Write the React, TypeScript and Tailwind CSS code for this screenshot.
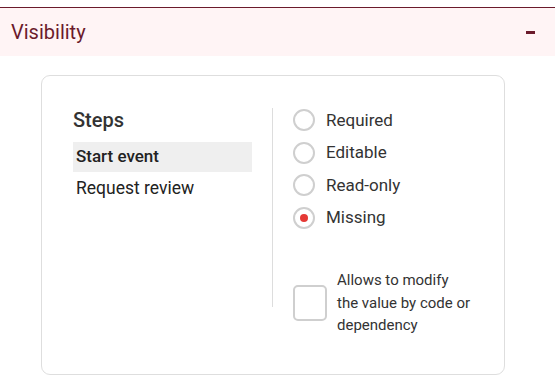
import React from "react";

const Radio = ({ label, checked }: { label: string; checked?: boolean }) => (
  <div className="flex items-center h-[32.5px]">
    <div className="w-[22px] h-[22px] rounded-full border-2 border-[#cfcfcf] bg-white flex items-center justify-center">
      {checked && <div className="w-[8px] h-[8px] rounded-full bg-[#e53935]" />}
    </div>
    <span className="ml-[11px] text-[17px] text-[#333]">{label}</span>
  </div>
);

export default function App() {
  return (
    <div
      className="w-[555px] h-[378px] bg-white overflow-hidden"
      style={{ fontFamily: "Roboto, 'Noto Sans', sans-serif" }}
    >
      <div className="h-[7px]" />
      <div className="border-t border-[#6b1a2b] h-[49px] bg-[#fff4f5] flex items-center justify-between pl-[11px] pr-[20px]">
        <span className="text-[20px] text-[#6b1a2b]">Visibility</span>
        <div className="w-[9px] h-[3px] bg-[#6b1a2b] mt-[1px]" />
      </div>
      <div className="ml-[41px] mt-[19px] w-[464px] h-[300px] border border-[#dedede] rounded-[9px] flex pt-[32px]">
        <div className="ml-[31px] w-[179px] flex flex-col">
          <div className="text-[20px] font-medium text-[#333] leading-[24px]">Steps</div>
          <div className="mt-[10px] h-[30px] bg-[#efefef] flex items-center pl-[3px] text-[17px] font-medium text-[#222]">
            Start event
          </div>
          <div className="h-[33px] flex items-center pl-[3px] text-[17.5px] text-[#222]">Request review</div>
        </div>
        <div className="ml-[20px] w-px h-[199px] bg-[#dddddd]" />
        <div className="ml-[20px] flex flex-col -mt-[4px]">
          <Radio label="Required" />
          <Radio label="Editable" />
          <Radio label="Read-only" />
          <Radio label="Missing" checked />
          <div className="flex items-center mt-[35px]">
            <div className="w-[34px] h-[36px] rounded-[5px] border-2 border-[#cfcfcf]" />
            <div className="ml-[10px] text-[15px] leading-[22.5px] text-[#333]">
              Allows to modify
              <br />
              the value by code or
              <br />
              dependency
            </div>
          </div>
        </div>
      </div>
    </div>
  );
}
